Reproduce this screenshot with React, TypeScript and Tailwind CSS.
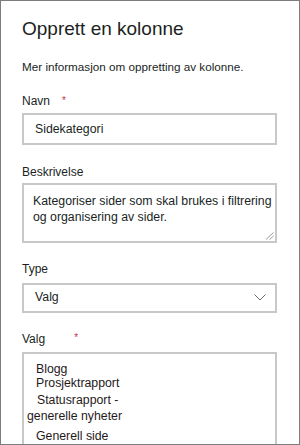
// Panel "Opprett en kolonne" – static mockup of the form.
const font = { fontFamily: '"Liberation Sans", Arial, sans-serif' };

function Asterisk({ className }: { className: string }) {
  return <span className={`text-[10px] leading-none text-[#c4314b] ${className}`}>*</span>;
}

export default function App() {
  return (
    <div
      style={font}
      className="flex h-[445px] w-[300px] flex-col overflow-hidden border border-[#7c7c7c] bg-white pt-[16px] pl-[21px] pr-[22px] text-[#201f1e]"
    >
      <h1 className="text-[19px] leading-[24px] font-normal">Opprett en kolonne</h1>
      <p className="mt-[18px] text-[11.7px] leading-[16px]">
        Mer informasjon om oppretting av kolonne.
      </p>

      {/* Navn */}
      <div className="mt-[18px] flex items-start text-[12px] leading-[16px]">
        <span>Navn</span>
        <Asterisk className="mt-[3px] ml-[12px]" />
      </div>
      <div className="mt-[4px] flex h-[32px] items-center border-2 border-[#c8c8c8] pl-[11px] text-[12.3px]">
        Sidekategori
      </div>

      {/* Beskrivelse */}
      <div className="mt-[19px] text-[12px] leading-[16px]">Beskrivelse</div>
      <div className="relative mt-[3px] h-[60px] border-2 border-[#c8c8c8] pt-[8px] pl-[9px] text-[12.3px] leading-[16px]">
        Kategoriser sider som skal brukes i filtrering
        <br />
        og organisering av sider.
        <svg
          className="absolute right-[1px] bottom-[1px]"
          width="9"
          height="8"
          viewBox="0 0 9 8"
          fill="none"
          stroke="#9a9a9a"
          strokeWidth="1"
        >
          <path d="M1 7.5L8.5 0.5" />
          <path d="M4.5 7.5L8.5 4" />
        </svg>
      </div>

      {/* Type */}
      <div className="mt-[18px] text-[12px] leading-[16px]">Type</div>
      <div className="mt-[6px] flex h-[30px] items-center justify-between border-2 border-[#c8c8c8] pr-[9px] pl-[11px] text-[12.3px]">
        <span>Valg</span>
        <svg width="12" height="7" viewBox="0 0 12 7" fill="none" stroke="#6b6b6b" strokeWidth="1">
          <path d="M0.5 0.5L6 6L11.5 0.5" />
        </svg>
      </div>

      {/* Valg */}
      <div className="mt-[18px] flex items-start text-[12px] leading-[16px]">
        <span>Valg</span>
        <Asterisk className="mt-[2px] ml-[29px]" />
      </div>
      <div className="mt-[5px] flex-1 border-2 border-b-0 border-[#c8c8c8] pt-[7px] text-[12.3px] leading-[16px] text-[#1f1a1a]">
        <div className="pl-[12px]">Blogg</div>
        <div className="-mt-[1.5px] pl-[12px]">Prosjektrapport</div>
        <div className="mt-[1px] pl-[3px] indent-[10px]">
          Statusrapport -
          <br />
          generelle nyheter
        </div>
        <div className="mt-[4px] pl-[12px]">Generell side</div>
      </div>
    </div>
  );
}
